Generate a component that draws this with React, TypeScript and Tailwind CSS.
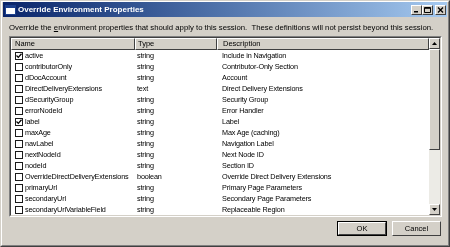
import { Fragment } from 'react'

const ROWS = [
  { name: 'active', type: 'string', desc: 'Include in Navigation', on: true },
  { name: 'contributorOnly', type: 'string', desc: 'Contributor-Only Section' },
  { name: 'dDocAccount', type: 'string', desc: 'Account' },
  { name: 'DirectDeliveryExtensions', type: 'text', desc: 'Direct Delivery Extensions' },
  { name: 'dSecurityGroup', type: 'string', desc: 'Security Group' },
  { name: 'errorNodeId', type: 'string', desc: 'Error Handler' },
  { name: 'label', type: 'string', desc: 'Label', on: true },
  { name: 'maxAge', type: 'string', desc: 'Max Age (caching)' },
  { name: 'navLabel', type: 'string', desc: 'Navigation Label' },
  { name: 'nextNodeId', type: 'string', desc: 'Next Node ID' },
  { name: 'nodeId', type: 'string', desc: 'Section ID' },
  { name: 'OverrideDirectDeliveryExtensions', type: 'boolean', desc: 'Override Direct Delivery Extensions' },
  { name: 'primaryUrl', type: 'string', desc: 'Primary Page Parameters' },
  { name: 'secondaryUrl', type: 'string', desc: 'Secondary Page Parameters' },
  { name: 'secondaryUrlVariableField', type: 'string', desc: 'Replaceable Region' },
]

// raised 3d edge used by header cells, scroll buttons, title buttons
const raised = 'border border-t-white border-l-white border-r-[#404040] border-b-[#404040] bg-[#d4d0c8]'

function CheckBox({ on }: { on?: boolean }) {
  return (
    <div className="w-[8px] h-[8px] border border-[#1a1a1a] bg-white flex items-center justify-center shrink-0">
      {on && (
        <svg width="6" height="6" viewBox="0 0 6 6">
          <path d="M0.5 2.5 L2.3 4.4 L5.5 0.8" stroke="#000" strokeWidth="1.3" fill="none" />
        </svg>
      )}
    </div>
  )
}

function TitleButton({ kind }: { kind: 'min' | 'max' | 'close' }) {
  return (
    <div className={`w-[11px] h-[10px] flex items-center justify-center ${raised}`}>
      <svg width="7" height="6" viewBox="0 0 7 6">
        {kind === 'min' && <rect x="1" y="4" width="4" height="1.5" fill="#000" />}
        {kind === 'max' && <path d="M0.5 0.5 H6.5 V5.5 H0.5 Z M0.5 1.3 H6.5" stroke="#000" strokeWidth="1" fill="none" />}
        {kind === 'close' && <path d="M1 0.5 L6 5.5 M6 0.5 L1 5.5" stroke="#000" strokeWidth="1.3" />}
      </svg>
    </div>
  )
}

function Arrow({ up }: { up?: boolean }) {
  return (
    <div className={`w-[11px] h-[11px] flex items-center justify-center ${raised}`}>
      <svg width="5" height="3" viewBox="0 0 5 3">
        <path d={up ? 'M2.5 0 L5 3 L0 3 Z' : 'M0 0 L5 0 L2.5 3 Z'} fill="#000" />
      </svg>
    </div>
  )
}

export default function App() {
  return (
    <div className="w-[450px] h-[247px] bg-[#d4d0c8] border border-t-[#d4d0c8] border-l-[#d4d0c8] border-r-[#404040] border-b-[#404040] font-['Liberation_Sans',Arial,sans-serif] text-[7.5px] text-black overflow-hidden will-change-transform">
      <div className="h-full border border-t-white border-l-white border-r-[#808080] border-b-[#808080] px-px flex flex-col">
        {/* Title bar */}
        <div className="h-[15px] flex items-center pl-[2px] pr-[1px] bg-gradient-to-r from-[#0a246a] to-[#a6caf0]">
          <svg width="11" height="10" viewBox="0 0 11 10" className="shrink-0">
            <rect x="0.5" y="0.5" width="10" height="9" fill="#fff" stroke="#1c3f8c" />
            <rect x="1" y="1" width="9" height="2" fill="#1c3f8c" />
          </svg>
          <span className="ml-[2px] text-white font-bold text-[8px] leading-none">Override Environment Properties</span>
          <div className="ml-auto flex items-center">
            <TitleButton kind="min" />
            <TitleButton kind="max" />
            <div className="ml-[2px]"><TitleButton kind="close" /></div>
          </div>
        </div>

        {/* Instruction */}
        <div className="mt-[6px] ml-[6px] leading-[9px] text-[7.75px] whitespace-pre">
          Override the <span className="underline">e</span>nvironment properties that should apply to this session.  These definitions will not persist beyond this session.
        </div>

        {/* List */}
        <div className="mt-[4px] ml-[6px] mr-[5px] h-[181px] border border-t-[#808080] border-l-[#808080] border-r-white border-b-white">
          <div className="h-full border border-t-[#404040] border-l-[#404040] border-r-[#d4d0c8] border-b-[#d4d0c8] bg-white flex overflow-hidden">
            <div className="flex-1 flex flex-col">
              <div className="h-[12px] flex shrink-0">
                <div className={`w-[124px] pl-[3px] leading-[10px] ${raised}`}>Name</div>
                <div className={`w-[82px] pl-[2px] leading-[10px] ${raised}`}>Type</div>
                <div className={`flex-1 pl-[5px] leading-[10px] ${raised}`}>Description</div>
              </div>
              <div className="grid grid-cols-[124px_82px_1fr] auto-rows-[11px] leading-[11px] text-[7.25px] tracking-[-0.15px]">
                {ROWS.map((r) => (
                  <Fragment key={r.name}>
                    <div className="flex items-center gap-[2px] pl-[4px] whitespace-nowrap">
                      <CheckBox on={r.on} />
                      <span>{r.name}</span>
                    </div>
                    <div className="pl-[2px]">{r.type}</div>
                    <div className="pl-[5px] whitespace-nowrap">{r.desc}</div>
                  </Fragment>
                ))}
              </div>
            </div>
            {/* Scrollbar */}
            <div className="w-[11px] flex flex-col bg-[#ecebe6]">
              <Arrow up />
              <div className={`h-[101px] ${raised}`} />
              <div className="flex-1" />
              <Arrow />
            </div>
          </div>
        </div>

        {/* Buttons */}
        <div className="mt-[4px] mr-[6px] flex justify-end gap-[5px]">
          <div className="w-[50px] h-[15px] border border-black">
            <div className={`h-full flex items-center justify-center ${raised}`}>OK</div>
          </div>
          <div className={`w-[49px] h-[15px] flex items-center justify-center ${raised}`}>Cancel</div>
        </div>
      </div>
    </div>
  )
}
